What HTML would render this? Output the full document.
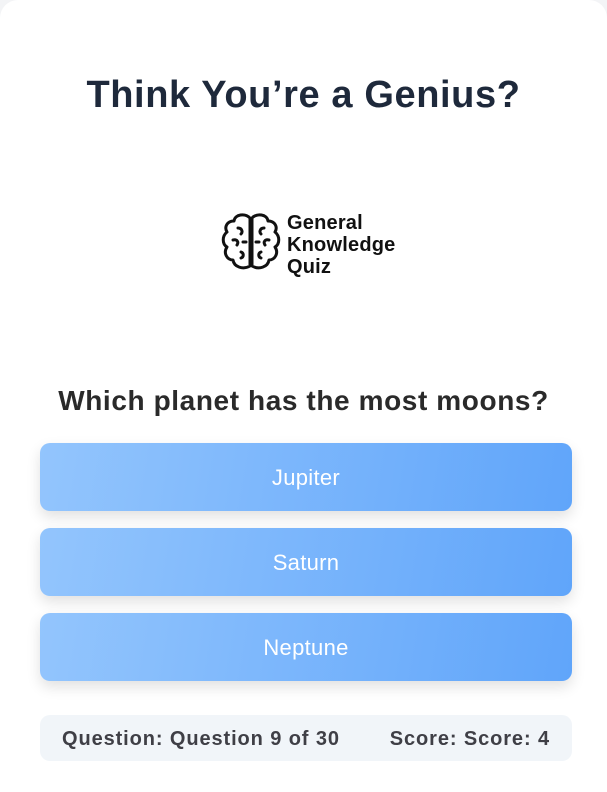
<!DOCTYPE html>
<html><head><meta charset="utf-8"><style>
html,body{margin:0;padding:0;width:607px;height:792px;overflow:hidden;background:#f3f4f6;}
.card{position:absolute;left:0;top:0;width:607px;height:792px;background:#fff;border-radius:18px 18px 0 0;}
h1{position:absolute;top:74px;left:0;width:607px;margin:0;text-align:center;font:bold 38px "Liberation Sans",sans-serif;color:#1e293b;letter-spacing:0.6px;}
.logo{position:absolute;left:221px;top:212px;}
.lt{position:absolute;left:287px;top:212px;font:bold 20px/22px "Liberation Sans",sans-serif;color:#111;letter-spacing:0.2px;}
.q{position:absolute;top:385px;left:0;width:607px;text-align:center;font:bold 28px "Liberation Sans",sans-serif;color:#2a2a2a;letter-spacing:0.6px;}
.btn{position:absolute;left:40px;width:532px;height:68px;border-radius:10px;background:linear-gradient(100deg,#93c5fd,#60a5fa);box-shadow:0 6px 14px rgba(0,0,0,0.12);color:#fff;font:22px "Liberation Sans",sans-serif;letter-spacing:0.3px;text-align:center;line-height:70px;}
.foot{position:absolute;left:40px;top:715px;width:532px;height:46px;border-radius:10px;background:#f1f5f9;font:bold 20px/48px "Liberation Sans",sans-serif;color:#3f3f46;letter-spacing:0.9px;}
</style></head><body><div class="card">
<h1>Think You’re a Genius?</h1>
<svg class="logo" width="60" height="62" viewBox="0 0 60 62" fill="none" stroke="#111" stroke-width="3" stroke-linecap="round" stroke-linejoin="round">
<path d="M29 6 C24 1 14 2 13 9 C6 9 3 15 6 20 C1 24 1 32 6 35 C2 41 6 48 12 48 C13 55 22 58 29 54 Z"/>
<path d="M31 6 C36 1 46 2 47 9 C54 9 57 15 54 20 C59 24 59 32 54 35 C58 41 54 48 48 48 C47 55 38 58 31 54 Z"/>
<path d="M17 16 C21 16 22 20 20 22 M12 28 C16 27 18 30 16 33 M20 40 C23 41 23 45 20 46 M22 30 H25"/>
<path d="M43 16 C39 16 38 20 40 22 M48 28 C44 27 42 30 44 33 M40 40 C37 41 37 45 40 46 M38 30 H35"/>
</svg>
<div class="lt">General<br>Knowledge<br>Quiz</div>
<div class="q">Which planet has the most moons?</div>
<div class="btn" style="top:443px">Jupiter</div>
<div class="btn" style="top:528px">Saturn</div>
<div class="btn" style="top:613px">Neptune</div>
<div class="foot"><span style="position:absolute;left:22px">Question: Question 9 of 30</span><span style="position:absolute;right:22px">Score: Score: 4</span></div>
</div></body></html>
